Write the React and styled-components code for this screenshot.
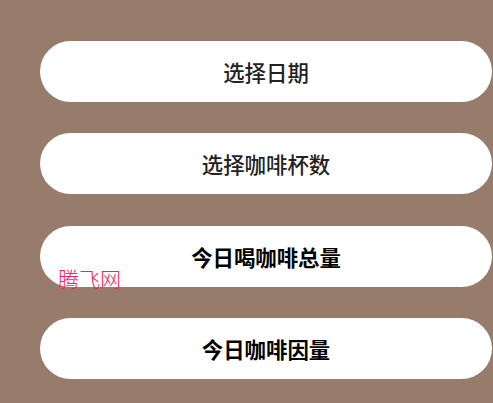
import React from "react";
import styled, { createGlobalStyle } from "styled-components";

const Global = createGlobalStyle`
  html, body { margin: 0; padding: 0; background: #987c6b; }
  body { font-family: "Noto Sans CJK SC", "Noto Sans", sans-serif; }
`;

const Page = styled.div`
  position: relative;
  width: 493px;
  height: 403px;
  overflow: hidden;
  background: #987c6b;
  box-sizing: border-box;
  padding: 41px 0 0 40px;
  display: flex;
  flex-direction: column;
  gap: 31.33px;
`;

const PillButton = styled.button`
  width: 452px;
  height: 61px;
  flex: none;
  border: none;
  border-radius: 31px;
  background: #ffffff;
  display: flex;
  align-items: center;
  justify-content: center;
  padding: 0;
  font-family: "Noto Sans CJK SC", "Noto Sans", sans-serif;
  font-size: 21.4px;
  font-weight: ${(p) => (p.$strong ? 700 : 500)};
  color: ${(p) => (p.$strong ? "#000000" : "#222222")};
  cursor: pointer;
`;

const Watermark = styled.span`
  position: absolute;
  left: 58px;
  top: 265px;
  font-family: "Noto Sans CJK SC", sans-serif;
  font-size: 21px;
  font-weight: 300;
  line-height: 26px;
  color: #f3245a;
  pointer-events: none;
`;

export default function App() {
  return (
    <>
      <Global />
      <Page>
        <PillButton>选择日期</PillButton>
        <PillButton>选择咖啡杯数</PillButton>
        <PillButton $strong>今日喝咖啡总量</PillButton>
        <PillButton $strong>今日咖啡因量</PillButton>
        <Watermark>腾飞网</Watermark>
      </Page>
    </>
  );
}
